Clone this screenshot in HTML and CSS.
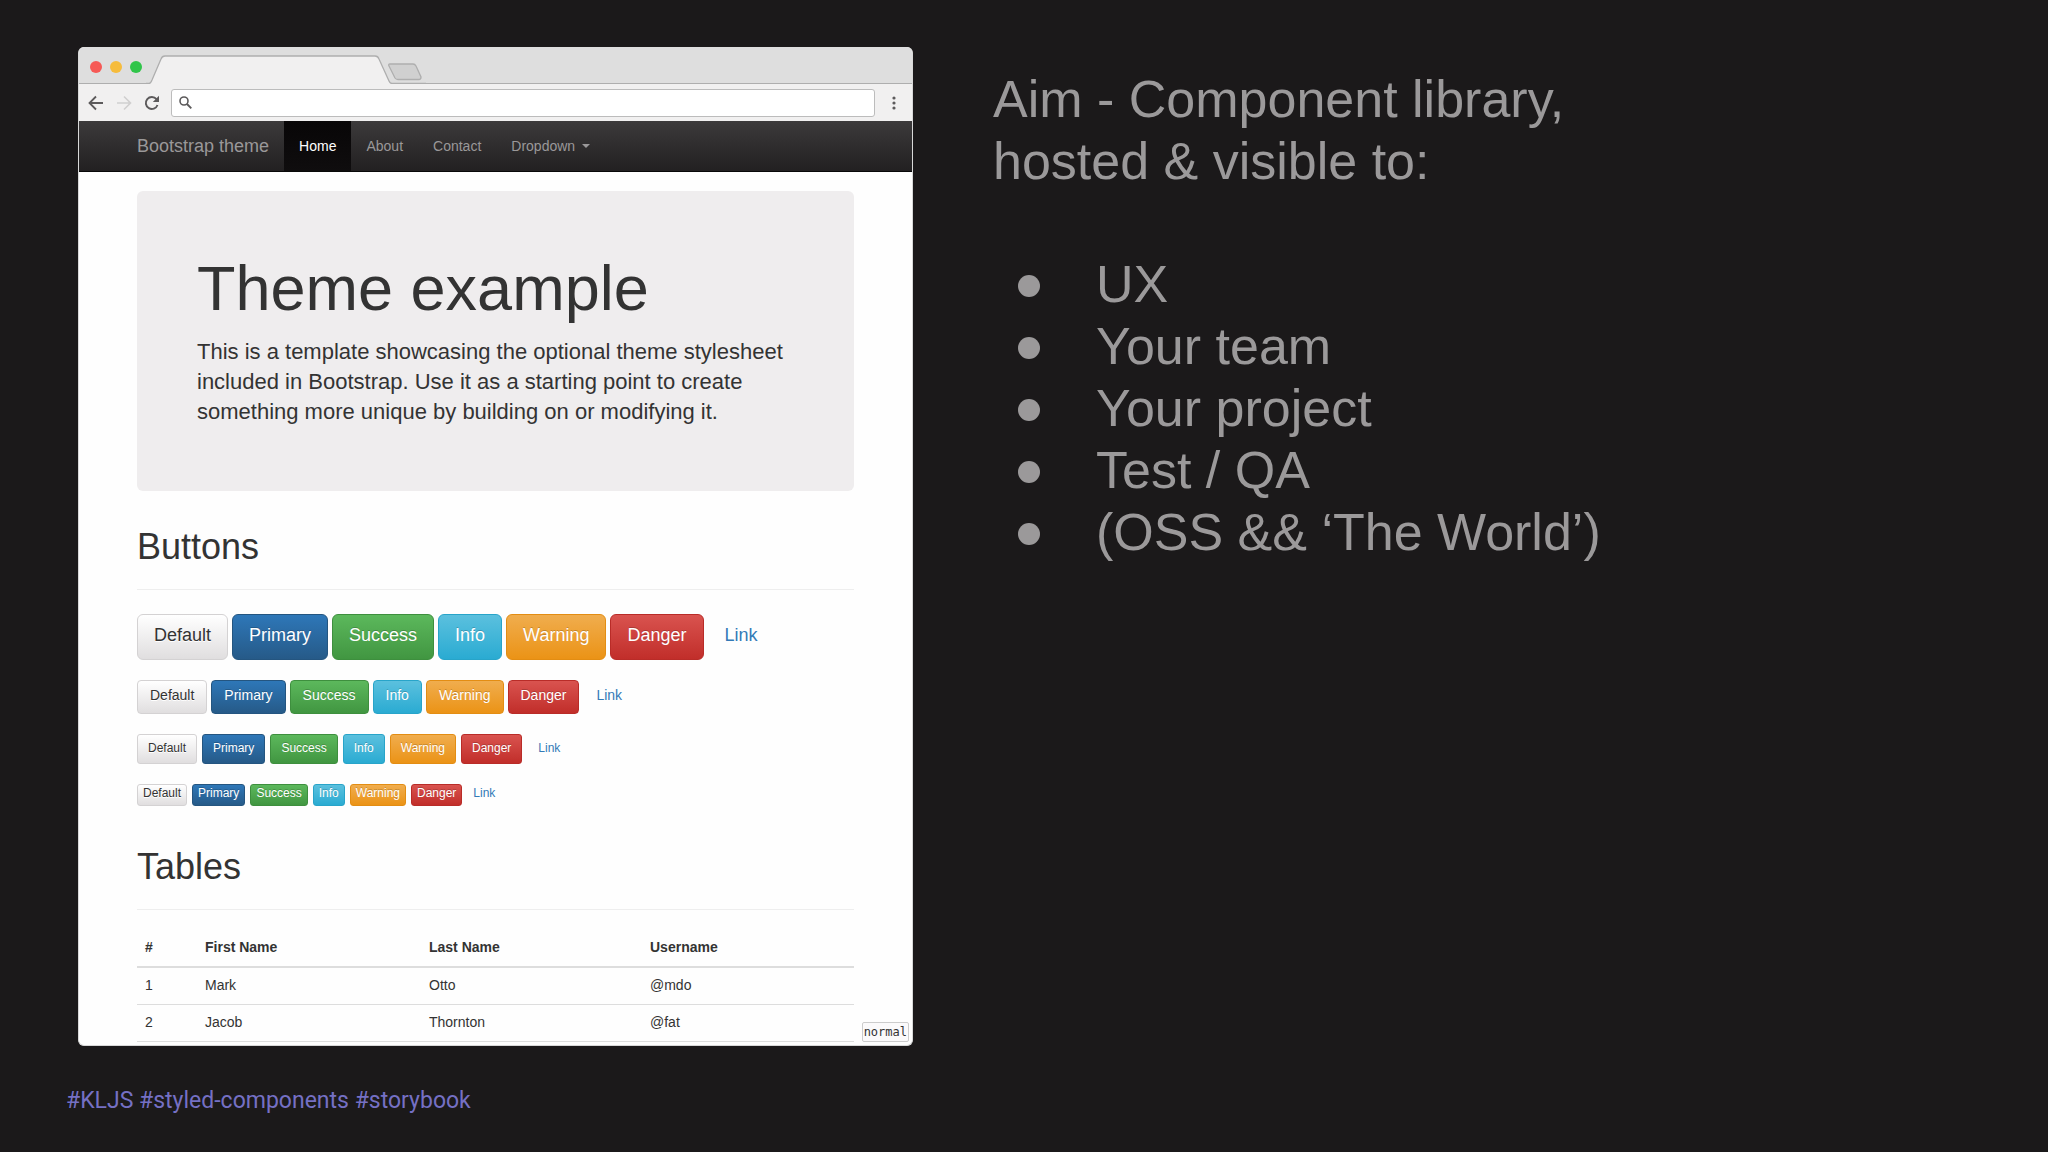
FILE: index.html
```html
<!DOCTYPE html>
<html lang="en">
<head>
<meta charset="utf-8">
<meta name="viewport" content="width=device-width, initial-scale=1">
<title>Aim - Component library</title>
<link rel="stylesheet" href="styles.css">
</head>
<body>
<div class="slide">
  <main class="columns">
    <section class="browser" aria-label="Browser window">
      <div class="tabstrip">
        <div class="lights"><i class="light red"></i><i class="light yellow"></i><i class="light green"></i></div>
        <svg class="tabs" width="280" height="37" viewBox="0 0 280 37" aria-hidden="true">
          <path d="M0 36.5H3C5 36.500 5 35 6 33L15 12Q16 9 19 9H229Q232 9 233 12L243 34Q244 36.500 246 36.500H280V37H0Z" fill="#f1f0f0"/>
          <path d="M0 36.500H3C5 36.500 5 35 6 33L15 12Q16 9 19 9H229Q232 9 233 12L243 34Q244 36.500 246 36.500H280" fill="none" stroke="#aeaeae" stroke-width="1.300"/>
          <path d="M244 17H267Q269 17 270 19L275 30Q275 32.500 273 32.500H252Q250 32.500 249 31L243 19Q242 17 244 17Z" fill="#d0d0d0" stroke="#aeaeae" stroke-width="1.300"/>
        </svg>
      </div>
      <div class="toolbar">
        <button class="tool" type="button" aria-label="Back"><svg width="16" height="16" viewBox="0 0 16 16"><path d="M15 8H2M8 1.500L1.500 8L8 14.500" fill="none" stroke="#5c5a5b" stroke-width="1.800"/></svg></button>
        <button class="tool" type="button" aria-label="Forward"><svg width="16" height="16" viewBox="0 0 16 16"><path d="M1 8H14M8 1.500L14.500 8L8 14.500" fill="none" stroke="#d0cfcf" stroke-width="1.600"/></svg></button>
        <button class="tool" type="button" aria-label="Reload"><svg width="16" height="16" viewBox="0 0 16 16"><path d="M13.500 10A6 6 0 1 1 12.500 4.200" fill="none" stroke="#5c5a5b" stroke-width="1.900"/><path d="M15 .8V7H8.800Z" fill="#5c5a5b"/></svg></button>
        <label class="address">
          <svg width="13" height="13" viewBox="0 0 13 13" aria-hidden="true"><circle cx="5" cy="5" r="4" fill="none" stroke="#5c5a5b" stroke-width="1.600"/><path d="M8 8L12.300 12.300" stroke="#5c5a5b" stroke-width="1.900"/></svg>
          <input type="text" aria-label="Address">
        </label>
        <button class="tool" type="button" aria-label="Menu"><svg width="4" height="14" viewBox="0 0 4 14"><g fill="#5c5a5b"><circle cx="2" cy="2" r="1.600"/><circle cx="2" cy="7" r="1.600"/><circle cx="2" cy="12" r="1.600"/></g></svg></button>
      </div>
      <nav class="navbar">
        <a class="brand" href="#">Bootstrap theme</a>
        <a class="nav-link active" href="#">Home</a>
        <a class="nav-link" href="#">About</a>
        <a class="nav-link" href="#">Contact</a>
        <button class="nav-link" type="button">Dropdown<span class="caret"></span></button>
      </nav>
      <div class="page">
        <header class="jumbotron">
          <h1>Theme example</h1>
          <p>This is a template showcasing the optional theme stylesheet included in Bootstrap. Use it as a starting point to create something more unique by building on or modifying it.</p>
        </header>
        <h2 class="page-header">Buttons</h2>
        <div class="button-rows">
          <div class="button-row lg">
            <button type="button" class="btn default">Default</button><button type="button" class="btn primary">Primary</button><button type="button" class="btn success">Success</button><button type="button" class="btn info">Info</button><button type="button" class="btn warning">Warning</button><button type="button" class="btn danger">Danger</button><button type="button" class="btn link">Link</button>
          </div>
          <div class="button-row md">
            <button type="button" class="btn default">Default</button><button type="button" class="btn primary">Primary</button><button type="button" class="btn success">Success</button><button type="button" class="btn info">Info</button><button type="button" class="btn warning">Warning</button><button type="button" class="btn danger">Danger</button><button type="button" class="btn link">Link</button>
          </div>
          <div class="button-row sm">
            <button type="button" class="btn default">Default</button><button type="button" class="btn primary">Primary</button><button type="button" class="btn success">Success</button><button type="button" class="btn info">Info</button><button type="button" class="btn warning">Warning</button><button type="button" class="btn danger">Danger</button><button type="button" class="btn link">Link</button>
          </div>
          <div class="button-row xs">
            <button type="button" class="btn default">Default</button><button type="button" class="btn primary">Primary</button><button type="button" class="btn success">Success</button><button type="button" class="btn info">Info</button><button type="button" class="btn warning">Warning</button><button type="button" class="btn danger">Danger</button><button type="button" class="btn link">Link</button>
          </div>
        </div>
        <h2 class="page-header">Tables</h2>
        <table class="table">
          <colgroup><col class="col-id"><col class="col-first"><col class="col-last"><col></colgroup>
          <thead><tr><th>#</th><th>First Name</th><th>Last Name</th><th>Username</th></tr></thead>
          <tbody>
            <tr><td>1</td><td>Mark</td><td>Otto</td><td>@mdo</td></tr>
            <tr><td>2</td><td>Jacob</td><td>Thornton</td><td>@fat</td></tr>
          </tbody>
        </table>
      </div>
      <span class="mode">normal</span>
    </section>
    <section class="notes">
      <p>Aim - Component library,<br>hosted &amp; visible to:</p>
      <ul>
        <li>UX</li>
        <li>Your team</li>
        <li>Your project</li>
        <li>Test / QA</li>
        <li>(OSS &amp;&amp; ‘The World’)</li>
      </ul>
    </section>
  </main>
  <footer class="tags">#KLJS #styled-components #storybook</footer>
</div>
</body>
</html>
```
FILE: styles.css
```css
* { box-sizing: border-box; }

body {
  margin: 0;
  background: #1b191a;
  color: #333;
  font: 14px/20px "Liberation Sans", Arial, sans-serif;
}

h1, h2, p, ul { margin: 0; padding: 0; font-weight: 400; }
button, input { font: inherit; margin: 0; }
button { cursor: pointer; }
svg { display: block; }

.slide { min-height: 100vh; padding: 47px 66px 36px; }

.columns {
  display: grid;
  grid-template-columns: minmax(0, 835fr) minmax(0, 977fr);
  gap: 80px;
  align-items: start;
  padding: 0 12px;
}

/* Browser window */
.browser {
  position: relative;
  overflow: hidden;
  border: 1px solid #d8d8d8;
  border-top: 0;
  border-radius: 6px;
  background: #fefefe;
}

.tabstrip {
  display: flex;
  height: 37px;
  background: linear-gradient(#dedede, #dedede 36px, #aeaeae 36px);
}

.lights { display: flex; gap: 8px; padding: 14px 4px 0 11px; }
.light { width: 12px; height: 12px; border-radius: 50%; }
.red { background: #f65a56; }
.yellow { background: #f6bc3c; }
.green { background: #30c54a; }

.toolbar {
  display: flex;
  align-items: center;
  gap: 10px;
  height: 37px;
  padding: 0 9px 0 8px;
  background: #f1f0f0;
}

.tool {
  display: flex;
  justify-content: center;
  width: 18px;
  padding: 0;
  border: 0;
  background: none;
}

.address {
  display: flex;
  flex: 1;
  align-items: center;
  height: 28px;
  padding: 0 8px 0 7px;
  border: 1px solid #bcbcbc;
  border-radius: 3px;
  background: #fff;
}
.address input { flex: 1; min-width: 0; border: 0; outline: 0; background: none; }

.navbar {
  display: flex;
  align-items: stretch;
  height: 51px;
  padding: 0 58px;
  border-bottom: 1px solid #080808;
  background: linear-gradient(#3c3a3b, #222021);
  line-height: 50px;
}
.brand, .nav-link { color: #9a9899; text-decoration: none; }
.brand { padding-right: 15px; font-size: 18px; }
.nav-link {
  display: flex;
  align-items: center;
  gap: 7px;
  padding: 0 15px;
  border: 0;
  background: none;
}
.nav-link.active { background: linear-gradient(#080607, #0f0d0e); color: #fff; }
.caret { border: 4px solid transparent; border-top-color: currentColor; border-bottom: 0; }

.page { padding: 19px 58px 3px; }

.jumbotron {
  padding: 62px 58px 64px 60px;
  border-radius: 6px;
  background: #efedee;
}
.jumbotron h1 { margin-bottom: 14px; font-size: 63px; line-height: 70px; }
.jumbotron p { font-size: 22px; line-height: 30px; }

.page-header {
  margin: 36px 0 20px;
  padding-bottom: 22px;
  border-bottom: 1px solid #eee;
  font-size: 36px;
  line-height: 40px;
}

.button-rows { display: grid; gap: 20px; padding: 4px 0 5px; }
.button-row { display: flex; gap: 4px; }
.button-row.sm, .button-row.xs { gap: 5px; }

.btn {
  border: 1px solid;
  border-radius: 4px;
  color: #fff;
  text-shadow: 0 -1px 0 rgba(0, 0, 0, .2);
  white-space: nowrap;
}
.lg .btn { height: 46px; padding: 0 16px 4px; border-radius: 6px; font-size: 18px; }
.md .btn { height: 34px; padding: 0 12px 4px; }
.sm .btn { height: 30px; padding: 0 10px 2px; border-radius: 3px; font-size: 12px; line-height: 18px; }
.xs .btn { height: 22px; padding: 0 5px 4px; border-radius: 3px; font-size: 12px; line-height: 16px; }

.default { border-color: #d4d2d3; background: linear-gradient(#fff, #e0dedf); color: #333; text-shadow: 0 1px 0 #fff; }
.primary { border-color: #245580; background: linear-gradient(#2e77b8, #265a88); }
.success { border-color: #3e8f3e; background: linear-gradient(#5cb85c, #419641); }
.info { border-color: #28a4c9; background: linear-gradient(#5bc0de, #2aabd2); }
.warning { border-color: #e38d13; background: linear-gradient(#f0ad4e, #eb9316); }
.danger { border-color: #b92c28; background: linear-gradient(#d9534f, #c12e2a); }
.link { border-color: transparent; background: none; color: #337ab7; text-shadow: none; }

.table { width: 100%; border-collapse: collapse; table-layout: fixed; }
.table th, .table td { padding: 7px 8px 9px; border-bottom: 1px solid #ddd; text-align: left; }
.table th { border-bottom-width: 2px; }
.col-id { width: 60px; }
.col-first { width: 224px; }
.col-last { width: 221px; }

.mode {
  position: absolute;
  right: 3px;
  bottom: 3px;
  padding: 0 1px;
  border: 1px solid #ccc;
  border-radius: 2px;
  background: #fbfafb;
  font: 12px/18px "DejaVu Sans Mono", monospace;
}

/* Slide text */
.notes { padding-top: 21px; color: #9b999a; font-size: 52px; line-height: 62px; }
.notes ul { margin-top: 61px; list-style: none; }
.notes li { display: flex; align-items: center; gap: 56px; padding-left: 25px; }
.notes li::before {
  content: "";
  width: 22px;
  height: 22px;
  margin-top: 4px;
  border-radius: 50%;
  background: currentColor;
}

.tags {
  margin-top: 41px;
  color: #7570c4;
  font: 23px/28px Roboto, sans-serif;
}
```
